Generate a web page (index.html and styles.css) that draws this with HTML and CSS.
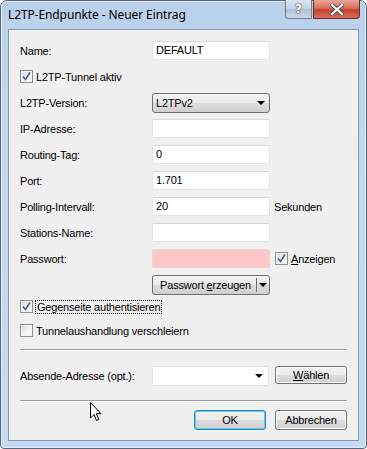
FILE: index.html
```html
<!DOCTYPE html>
<html>
<head>
  <title>L2TP-Endpunkte - Neuer Eintrag</title>
  <link rel="stylesheet" href="styles.css">
</head>
<body>
  <div class="window">
    <div class="titlebar">
      <span class="title">L2TP-Endpunkte - Neuer Eintrag</span>
      <div class="caption-buttons">
        <div class="cap-btn help">?</div>
        <div class="cap-btn close">
          <svg width="14" height="11" viewBox="0 0 14 11"><path d="M2 1 L12 10 M12 1 L2 10" stroke="#4d4d4d" stroke-width="4" stroke-linecap="square"/><path d="M2 1 L12 10 M12 1 L2 10" stroke="#fff" stroke-width="2.2" stroke-linecap="square"/></svg>
        </div>
      </div>
    </div>

    <div class="client">
      <div class="form">
        <label class="lbl">Name:</label>
        <div class="edit">DEFAULT</div>
        <div></div>

        <div class="check-row full">
          <span class="box checked"><svg width="9" height="9" viewBox="0 0 9 9"><path d="M1 4.5 L3.5 7.5 L8 0.5" stroke="#4a5f97" stroke-width="1.6" fill="none"/></svg></span>
          <span>L2TP-Tunnel aktiv</span>
        </div>

        <label class="lbl">L2TP-Version:</label>
        <div class="dropdown">
          <span>L2TPv2</span>
          <span class="arrow"></span>
        </div>
        <div></div>

        <label class="lbl">IP-Adresse:</label>
        <div class="edit"></div>
        <div></div>

        <label class="lbl">Routing-Tag:</label>
        <div class="edit">0</div>
        <div></div>

        <label class="lbl">Port:</label>
        <div class="edit">1.701</div>
        <div></div>

        <label class="lbl">Polling-Intervall:</label>
        <div class="edit">20</div>
        <div class="unit">Sekunden</div>

        <label class="lbl">Stations-Name:</label>
        <div class="edit"></div>
        <div></div>

        <label class="lbl">Passwort:</label>
        <div class="edit pink"></div>
        <div class="check-row side">
          <span class="box checked"><svg width="9" height="9" viewBox="0 0 9 9"><path d="M1 4.5 L3.5 7.5 L8 0.5" stroke="#4a5f97" stroke-width="1.6" fill="none"/></svg></span>
          <span><u>A</u>nzeigen</span>
        </div>

        <div></div>
        <div class="split-btn">
          <span class="split-text">Passwort <u>e</u>rzeugen</span>
          <span class="split-arrow"><span class="arrow"></span></span>
        </div>
        <div></div>
      </div>

      <div class="checks">
        <div class="check-row">
          <span class="box checked"><svg width="9" height="9" viewBox="0 0 9 9"><path d="M1 4.5 L3.5 7.5 L8 0.5" stroke="#4a5f97" stroke-width="1.6" fill="none"/></svg></span>
          <span class="focus">Gegenseite authentisieren</span>
        </div>
        <div class="check-row">
          <span class="box"></span>
          <span>Tunnelaushandlung verschleiern</span>
        </div>
      </div>

      <div class="sep"></div>

      <div class="addr-row">
        <label class="lbl addr-lbl">Absende-Adresse (opt.):</label>
        <div class="combo"><span class="arrow"></span></div>
        <button class="btn pick"><u>W</u>ählen</button>
      </div>

      <div class="sep sep-low"></div>

      <div class="actions">
        <button class="btn default">OK</button>
        <button class="btn">Abbrechen</button>
      </div>

      <svg class="cursor" width="13" height="20" viewBox="0 0 13 20"><path d="M0.5 0.5 L0.5 16 L4 12.5 L6.5 18.5 L8.8 17.5 L6.3 11.7 L11 11.7 Z" fill="#fff" stroke="#000" stroke-width="1" stroke-linejoin="miter"/></svg>
    </div>
  </div>
</body>
</html>
```

FILE: styles.css
```css
body {
  margin: 0;
  background: #fff;
  font-family: "Liberation Sans", Arial, sans-serif;
}

.window {
  width: 367px;
  height: 449px;
  box-sizing: border-box;
  border: 1px solid #57677c;
  border-radius: 7px 7px 4px 4px;
  padding: 0 7px 7px 7px;
  background: linear-gradient(to bottom, #b9d1ea 0%, #c4d9ef 40%, #c6dbf1 100%);
  box-shadow: inset 0 0 0 1px #e3eefa;
  display: flex;
  flex-direction: column;
}

.titlebar {
  height: 28px;
  display: flex;
  justify-content: space-between;
  align-items: flex-start;
}

.title {
  font-family: "Noto Sans", "Liberation Sans", sans-serif;
  font-size: 12px;
  line-height: 28px;
  color: #000;
  letter-spacing: -0.1px;
}

.caption-buttons {
  display: flex;
  margin-top: -1px;
  margin-right: -1px;
  gap: 1px;
}

.cap-btn {
  height: 19px;
  box-sizing: border-box;
  border: 1px solid #6f7f94;
  border-top: none;
  display: flex;
  align-items: center;
  justify-content: center;
}

.help {
  width: 27px;
  border-radius: 0 0 0 4px;
  background: linear-gradient(to bottom, #dbe5f1 0%, #c3d3e6 50%, #aec1d8 51%, #c8d8ea 100%);
  color: #fff;
  font-family: "DejaVu Sans", sans-serif;
  font-weight: bold;
  font-size: 12px;
  text-shadow: 0 0 2px #444, 0 0 1px #333;
}

.close {
  width: 47px;
  border-color: #6e2a22;
  border-radius: 0 0 4px 0;
  background: linear-gradient(to bottom, #e9a99b 0%, #d7705d 45%, #c5412a 55%, #d3705c 100%);
}

.client {
  flex: 1;
  position: relative;
  border: 1px solid #8596ad;
  background: #f0f0f0;
  padding: 11px 11px 0 11px;
  font-size: 11px;
  letter-spacing: -0.2px;
  color: #000;
}

.form {
  display: grid;
  grid-template-columns: 132px 118px auto;
  grid-auto-rows: 19px;
  row-gap: 7px;
  align-items: center;
}

.lbl {
  white-space: nowrap;
}

.edit {
  height: 19px;
  box-sizing: border-box;
  background: #fff;
  border: 1px solid #e2e3ea;
  border-top-color: #d5d8df;
  border-radius: 2px;
  padding: 0 0 0 3px;
  line-height: 17px;
}

.pink {
  background: #ffc8c8;
  border-color: #e6d6d8;
}

.unit {
  padding-left: 4px;
}

.full {
  grid-column: 1 / 4;
}

.check-row {
  display: flex;
  align-items: center;
  gap: 3px;
  white-space: nowrap;
}

.box {
  width: 13px;
  height: 13px;
  box-sizing: border-box;
  border: 1px solid #8e8f8f;
  background: linear-gradient(135deg, #dcdcdc 0%, #f4f4f4 60%, #fff 100%);
  box-shadow: inset 0 0 0 1px #f4f4f4;
  display: flex;
  align-items: center;
  justify-content: center;
}

.side {
  padding-left: 5px;
}

.arrow {
  width: 0;
  height: 0;
  border-left: 4px solid transparent;
  border-right: 4px solid transparent;
  border-top: 4px solid #000;
}

.dropdown {
  height: 20px;
  box-sizing: border-box;
  margin-top: 1px;
  border: 1px solid #707070;
  border-radius: 3px;
  background: linear-gradient(to bottom, #f2f2f2 0%, #ebebeb 50%, #dddddd 51%, #cfcfcf 100%);
  display: flex;
  align-items: center;
  justify-content: space-between;
  padding: 0 4px 0 3px;
}

.split-btn {
  height: 20px;
  box-sizing: border-box;
  border: 1px solid #707070;
  border-radius: 3px;
  background: linear-gradient(to bottom, #f2f2f2 0%, #ebebeb 50%, #dddddd 51%, #cfcfcf 100%);
  display: flex;
  align-items: center;
  margin-top: 1px;
}

.split-text {
  flex: 1;
  text-align: center;
  padding-left: 2px;
}

.split-arrow {
  width: 12px;
  height: 14px;
  border-left: 1px solid #707070;
  display: flex;
  align-items: center;
  justify-content: center;
}

.checks {
  margin-top: 6px;
  display: flex;
  flex-direction: column;
  gap: 11px;
}

.checks .check-row {
  height: 13px;
}

.focus {
  outline: 1px dotted #000;
  outline-offset: 0;
  padding: 0 1px;
}

.sep {
  height: 1px;
  background: #a0a0a0;
  border-bottom: 1px solid #fff;
  margin-top: 12px;
}

.sep-low {
  margin-top: 14px;
}

.addr-row {
  display: flex;
  align-items: center;
  margin-top: 15px;
  height: 20px;
}

.addr-lbl {
  width: 132px;
}

.combo {
  width: 118px;
  height: 20px;
  box-sizing: border-box;
  background: #fff;
  border: 1px solid #e2e3ea;
  border-radius: 2px;
  display: flex;
  align-items: center;
  justify-content: flex-end;
  padding-right: 5px;
}

.btn {
  font-family: "Liberation Sans", Arial, sans-serif;
  font-size: 11px;
  letter-spacing: -0.2px;
  color: #000;
  width: 72px;
  height: 20px;
  padding: 0;
  border: 1px solid #707070;
  border-radius: 3px;
  background: linear-gradient(to bottom, #f2f2f2 0%, #ebebeb 50%, #dddddd 51%, #cfcfcf 100%);
  box-shadow: inset 0 0 0 1px #fbfbfb;
}

.pick {
  margin-left: 6px;
  height: 18px;
  margin-top: -2px;
}

.actions {
  display: flex;
  justify-content: flex-end;
  gap: 9px;
  margin-top: 8px;
}

.default {
  border-color: #3c7fb1;
  box-shadow: inset 0 0 0 1px #48d3fb;
}

.cursor {
  position: absolute;
  left: 81px;
  top: 372px;
}
```
